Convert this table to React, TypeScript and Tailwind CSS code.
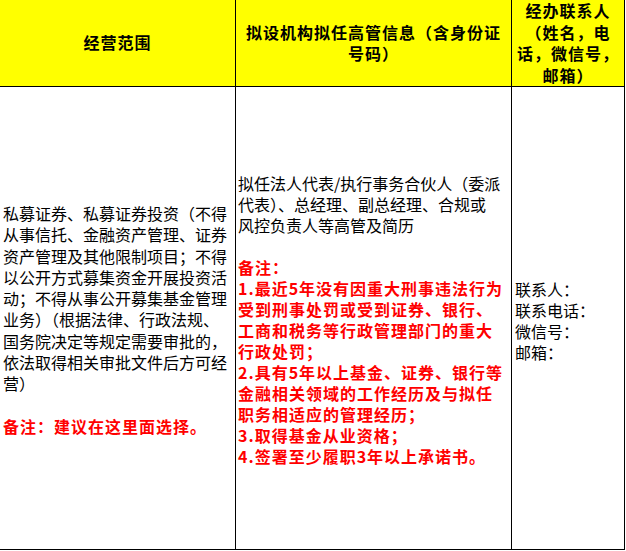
// Excel-style application sheet: business scope / executives / contact columns.

const BODY_FONT = "font-['Noto_Sans_CJK_SC',sans-serif]";

const SCOPE_LINES = [
  "私募证券、私募证券投资（不得",
  "从事信托、金融资产管理、证券",
  "资产管理及其他限制项目；不得",
  "以公开方式募集资金开展投资活",
  "动；不得从事公开募集基金管理",
  "业务）（根据法律、行政法规、",
  "国务院决定等规定需要审批的，",
  "依法取得相关审批文件后方可经",
  "营）",
];

const EXEC_LINES = [
  "拟任法人代表/执行事务合伙人（委派",
  "代表）、总经理、副总经理、合规或",
  "风控负责人等高管及简历",
];

const EXEC_NOTES = [
  "1.最近5年没有因重大刑事违法行为",
  "受到刑事处罚或受到证券、银行、",
  "工商和税务等行政管理部门的重大",
  "行政处罚；",
  "2.具有5年以上基金、证券、银行等",
  "金融相关领域的工作经历及与拟任",
  "职务相适应的管理经历；",
  "3.取得基金从业资格；",
  "4.签署至少履职3年以上承诺书。",
];

const CONTACT_LINES = ["联系人：", "联系电话：", "微信号：", "邮箱："];

function HeaderCell({ lines, className = "" }: { lines: string[]; className?: string }) {
  return (
    <div
      className={`flex flex-col items-center justify-center bg-[#ffff00] border-b border-black text-[16px] leading-[21.5px] font-bold tracking-[1px] text-black ${className}`}
    >
      {lines.map((l) => (
        <div key={l} className="whitespace-nowrap">
          {l}
        </div>
      ))}
    </div>
  );
}

function Line({ text, red }: { text: string; red?: boolean }) {
  return (
    <div
      className={
        red
          ? "whitespace-nowrap text-[#ff0000] font-bold tracking-[1px]"
          : "whitespace-nowrap text-black"
      }
    >
      {text}
    </div>
  );
}

export default function App() {
  return (
    <div className={`bg-white w-[626px] h-[551px] ${BODY_FONT}`}>
      <div className="grid grid-cols-[236px_276px_113px] grid-rows-[87px_463px]">
        {/* header */}
        <HeaderCell lines={["经营范围"]} className="border-r" />
        <HeaderCell lines={["拟设机构拟任高管信息（含身份证", "号码）"]} className="border-r" />
        <HeaderCell
          lines={["经办联系人", "（姓名，电", "话，微信号，", "邮箱）"]}
          className="border-r"
        />

        {/* body */}
        <div className="flex flex-col justify-center pl-[3px] pt-[4px] border-r border-b border-black text-[16px] leading-[21.25px]">
          {SCOPE_LINES.map((l) => (
            <Line key={l} text={l} />
          ))}
          <div className="h-[21.25px]" />
          <Line text="备注：建议在这里面选择。" red />
        </div>

        <div className="flex flex-col justify-center pl-[2px] pt-[4px] border-r border-b border-black text-[16px] leading-[21px]">
          {EXEC_LINES.map((l) => (
            <Line key={l} text={l} />
          ))}
          <div className="h-[21px]" />
          <Line text="备注：" red />
          {EXEC_NOTES.map((l) => (
            <Line key={l} text={l} red />
          ))}
        </div>

        <div className="flex flex-col justify-center pl-[3px] pt-[6px] border-r border-b border-black text-[16px] leading-[21px]">
          {CONTACT_LINES.map((l) => (
            <Line key={l} text={l} />
          ))}
        </div>
      </div>
    </div>
  );
}
